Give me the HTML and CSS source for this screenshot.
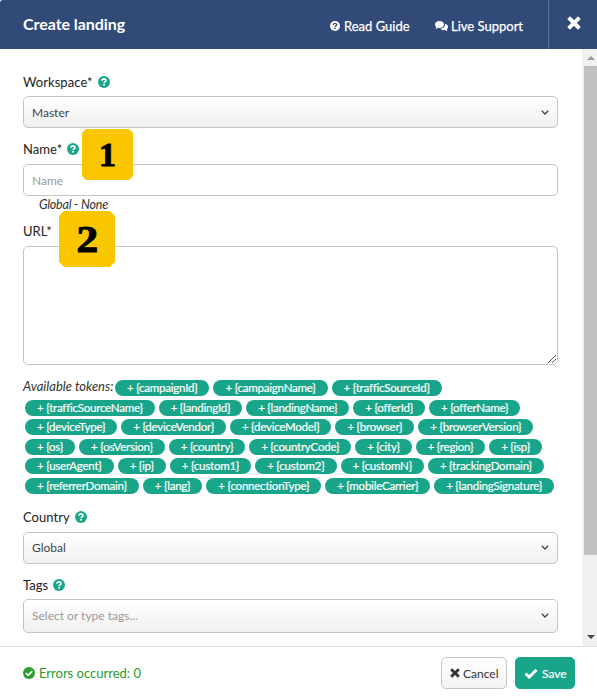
FILE: index.html
```html
<!DOCTYPE html>
<html lang="en">
<head>
<meta charset="utf-8">
<title>Create landing</title>
<link rel="stylesheet" href="styles.css">
</head>
<body>
<svg class="defs" width="0" height="0" aria-hidden="true">
  <symbol id="help" viewBox="0 0 12 12"><circle cx="6" cy="6" r="6" fill="currentColor"/><path class="mark" d="M4 4.7C4 2.2 8.1 2.3 8 4.6C7.9 5.8 6.2 5.6 6.1 7.1"/><rect class="dot" x="5.2" y="8" width="1.7" height="1.6"/></symbol>
  <symbol id="cross" viewBox="0 0 14 14"><path d="M3 3L11 11M11 3L3 11" stroke="currentColor" stroke-width="3.9" stroke-linecap="square" stroke-linejoin="round"/></symbol>
  <symbol id="chevron" viewBox="0 0 8 5"><path d="M.8 .8L4 4L7.2 .8" fill="none" stroke="#444" stroke-width="1.3"/></symbol>
</svg>
<div class="dialog">
  <header class="header">
    <h1 class="title">Create landing</h1>
    <a class="link guide"><svg class="icon-guide"><use href="#help"/></svg>Read Guide</a>
    <a class="link support"><svg class="icon-chat" viewBox="0 0 13 10"><path fill="currentColor" d="M4.5 0C7 0 9 1.5 9 3.5S7 7 4.5 7C4 7 3.5 6.9 3 6.8C2.3 7.4 1.4 7.8.4 7.8C.9 7.3 1.2 6.8 1.3 6.1C.5 5.4 0 4.5 0 3.5C0 1.5 2 0 4.5 0ZM10 3C11.800 3.300 13 4.400 13 5.900C13 6.900 12.500 7.600 11.700 8.300C11.800 9 12.200 9.500 12.700 10C11.600 10 10.700 9.600 10 9C7.800 9.400 6.200 8.800 5.400 7.800C8.200 7.500 10.300 5.700 10 3Z"/></svg>Live Support</a>
    <button class="close" aria-label="Close"><svg class="icon-close"><use href="#cross"/></svg></button>
  </header>
  <div class="body">
    <main class="form">
      <div class="label">Workspace*<svg class="help"><use href="#help"/></svg></div>
      <div class="control select">Master<svg class="chevron"><use href="#chevron"/></svg></div>
      <div class="label second">Name*<svg class="help"><use href="#help"/></svg><span class="badge one"><span class="digit">1</span></span></div>
      <div class="control placeholder">Name</div>
      <div class="hint">Global - None</div>
      <div class="label url">URL*<span class="badge two"><span class="digit">2</span></span></div>
      <div class="control textarea"><svg class="grip" viewBox="0 0 8 8"><path d="M0 8L8 0M4 8L8 4" stroke="#555"/></svg></div>
      <div class="tokens">
        <div class="row first"><em class="available">Available tokens:</em><span class="token">+ {campaignId}</span><span class="token">+ {campaignName}</span><span class="token">+ {trafficSourceId}</span></div>
        <div class="row"><span class="token">+ {trafficSourceName}</span><span class="token">+ {landingId}</span><span class="token">+ {landingName}</span><span class="token">+ {offerId}</span><span class="token">+ {offerName}</span></div>
        <div class="row"><span class="token">+ {deviceType}</span><span class="token">+ {deviceVendor}</span><span class="token">+ {deviceModel}</span><span class="token">+ {browser}</span><span class="token">+ {browserVersion}</span></div>
        <div class="row"><span class="token">+ {os}</span><span class="token">+ {osVersion}</span><span class="token">+ {country}</span><span class="token">+ {countryCode}</span><span class="token">+ {city}</span><span class="token">+ {region}</span><span class="token">+ {isp}</span></div>
        <div class="row"><span class="token">+ {userAgent}</span><span class="token">+ {ip}</span><span class="token">+ {custom1}</span><span class="token">+ {custom2}</span><span class="token">+ {customN}</span><span class="token">+ {trackingDomain}</span></div>
        <div class="row"><span class="token">+ {referrerDomain}</span><span class="token">+ {lang}</span><span class="token">+ {connectionType}</span><span class="token">+ {mobileCarrier}</span><span class="token">+ {landingSignature}</span></div>
      </div>
      <div class="label country">Country<svg class="help"><use href="#help"/></svg></div>
      <div class="control select raised">Global<svg class="chevron"><use href="#chevron"/></svg></div>
      <div class="label second">Tags<svg class="help"><use href="#help"/></svg></div>
      <div class="control select raised tags placeholder">Select or type tags...<svg class="chevron"><use href="#chevron"/></svg></div>
    </main>
    <div class="scrollbar"><span class="arrow up"></span><span class="thumb"></span><span class="arrow down"></span></div>
  </div>
  <footer class="footer">
    <div class="status"><svg class="icon-ok" viewBox="0 0 12 12"><circle cx="6" cy="6" r="6" fill="currentColor"/><path d="M2.800 6.100L5.200 8.300L9.200 4.200" fill="none" stroke="#fff" stroke-width="1.700"/></svg>Errors occurred: 0</div>
    <button class="button cancel"><svg class="icon-cancel"><use href="#cross"/></svg>Cancel</button>
    <button class="button save"><svg class="icon-save" viewBox="0 0 14 11"><path d="M1.500 5.500L5.200 9L12.500 1.700" fill="none" stroke="currentColor" stroke-width="3"/></svg>Save</button>
  </footer>
</div>
</body>
</html>
```
FILE: styles.css
```css
* { box-sizing: border-box; }
body { margin: 0; font-family: Lato, sans-serif; font-size: 13px; color: #333; background: #fff; }
button { font: inherit; padding: 0; }
.defs { position: absolute; }
svg { display: block; flex: none; }
.dialog { width: 597px; height: 696px; display: flex; flex-direction: column; }
.header { height: 49px; flex: none; display: flex; align-items: center; background: #314a78; color: #fff; padding-left: 23px; border-top-left-radius: 3px; }
.title { margin: 0; padding-bottom: 2px; font-size: 16px; line-height: 20px; font-weight: 700; letter-spacing: -.05px; width: 307px; }
.link { display: flex; align-items: center; height: 20px; margin-top: 2px; font-size: 13px; -webkit-text-stroke: .25px #fff; white-space: nowrap; }
.guide { width: 105px; }
.support { width: 113px; }
.icon-guide { --mark: #314a78; width: 10px; height: 10px; margin-right: 4px; }
.icon-chat { width: 13px; height: 10px; margin-right: 3px; }
.mark { fill: none; stroke: var(--mark, #fff); stroke-width: 1.6; }
.dot { fill: var(--mark, #fff); }
.close { width: 49px; height: 49px; border: 0; border-left: 1px solid #5c7096; background: none; color: #fff; padding: 0 0 3px 18px; }
.icon-close { width: 14px; height: 14px; }
.body { height: 597px; flex: none; display: flex; }
.form { width: 582px; padding: 23px 24px 0 23px; }
.label { position: relative; display: flex; align-items: center; height: 20px; margin-bottom: 4px; color: #222; font-size: 13px; letter-spacing: .06px; }
.second { margin-top: 11px; }
.help { width: 12px; height: 12px; margin-left: 5px; color: #1ba68a; }
.control { height: 32px; display: flex; align-items: center; justify-content: space-between; border: 1px solid #c2c4c6; border-radius: 5px; padding: 0 8px; font-size: 12px; color: #444; background: #fff; }
.select { background: linear-gradient(#fff, #f0f0f0); }
.raised { padding-bottom: 2px; }
.placeholder { color: #999; }
.chevron { width: 8px; height: 5px; }
.second + .control:not(.tags) { margin-top: 5px; }
.hint { height: 19px; padding-left: 16px; line-height: 18px; font-size: 12.5px; letter-spacing: -.2px; font-style: italic; }
.url { margin-top: 6px; margin-bottom: 5px; }
.country { margin-bottom: 5px; }
.textarea { height: 119px; align-items: flex-end; justify-content: flex-end; padding: 0 1px 1px 0; }
.grip { width: 8px; height: 8px; }
.badge { position: absolute; z-index: 1; display: flex; align-items: center; justify-content: center; background: #f9c600; color: #000; font: 700 36px/1 "Liberation Serif", serif; -webkit-text-stroke: 1px #000; }
.one { left: 59px; top: -10px; width: 51px; height: 51px; font-size: 34px; clip-path: polygon(4px 0, 47px 0, 100% 4px, 100% 47px, 47px 100%, 4px 100%, 0 47px, 0 4px); }
.two { left: 36px; top: -10px; width: 56px; height: 56px; font-size: 37px; clip-path: polygon(5px 0, 51px 0, 100% 5px, 100% 51px, 51px 100%, 5px 100%, 0 51px, 0 5px); }
.digit { transform: scaleX(1.17); }
.one .digit { transform: none; }
.tokens { height: 129px; padding-top: 15px; margin-bottom: 13px; }
.row { height: 19.6px; display: flex; gap: 4px; padding-left: 2px; }
.first { padding-left: 0; }
.available { width: 88px; line-height: 13px; font-size: 13px; white-space: nowrap; }
.token { height: 16px; line-height: 16px; border-radius: 8px; padding: 0 12px; background: #19a589; color: #fff; font-size: 11.5px; letter-spacing: -.22px; -webkit-text-stroke: .2px #fff; white-space: nowrap; }
.tags { height: 34px; }
.scrollbar { width: 15px; height: 597px; background: #f1f1f1; display: flex; flex-direction: column; align-items: center; }
.arrow { border: 4px solid transparent; }
.up { border-top: 0; border-bottom-color: #9b9b9b; margin: 7px 0 6px 2px; }
.thumb { width: 13px; height: 489px; align-self: flex-end; background: #c1c1c1; }
.down { border-bottom: 0; border-top-color: #444; margin: 80px 0 0 2px; }
.footer { height: 50px; display: flex; border-top: 1px solid #dfdfdf; padding: 10px 22px 0 23px; }
.status { flex: 1; height: 31px; display: flex; align-items: center; gap: 4px; color: #2a9b2e; font-size: 13px; }
.icon-ok { width: 12px; height: 12px; }
.button { height: 32px; display: flex; align-items: center; border: 1px solid #c4c6c8; border-radius: 5px; font-size: 12px; }
.cancel { width: 66px; padding-left: 8px; margin-right: 8px; background: linear-gradient(#fff, #f3f3f3); color: #333; }
.icon-cancel { width: 10px; height: 10px; margin-right: 3px; }
.save { width: 60px; padding-left: 8px; color: #fff; background: #19a589; border-color: #19a589; -webkit-text-stroke: .2px #fff; }
.icon-save { width: 14px; height: 11px; margin-right: 4px; }
```
